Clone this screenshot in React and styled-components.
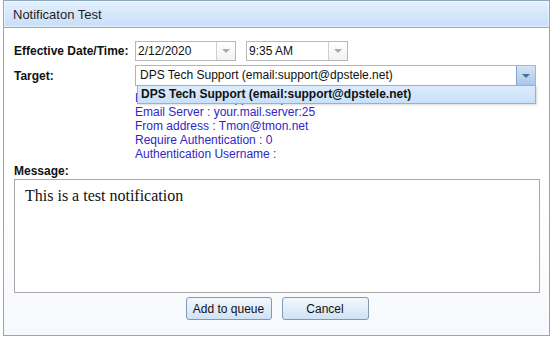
import React from 'react';
import styled, {createGlobalStyle} from 'styled-components';

const GlobalStyle = createGlobalStyle`
  html, body {
    margin: 0;
    padding: 0;
    background: #fff;
    font-family: "Liberation Sans", Arial, sans-serif;
  }
`;

const Window = styled.div`
  box-sizing: border-box;
  width: 547px;
  height: 336px;
  margin-left: 3px;
  border: 1px solid #8ea6be;
  background: linear-gradient(#ffffff 60%, #f6f9fd);
  display: flex;
  flex-direction: column;
`;

const TitleBar = styled.div`
  height: 26px;
  border-bottom: 1px solid #8ea6be;
  background: linear-gradient(#e4f0fe, #c6defa);
  box-shadow: inset 0 0 0 1px rgba(255, 255, 255, 0.55);
  display: flex;
  align-items: center;
  padding-left: 9px;
  font-size: 13px;
  color: #1e1e1e;
`;

const Body = styled.div`
  padding: 13px 9px 0 10px;
  display: flex;
  flex-direction: column;
`;

const Row = styled.div`
  display: flex;
  align-items: center;
  margin-top: ${p => p.$top || 0}px;
`;

const Label = styled.div`
  width: 121px;
  flex: none;
  font-size: 12px;
  font-weight: bold;
  color: #111;
`;

const Picker = styled.div`
  box-sizing: border-box;
  width: ${p => p.$width}px;
  height: 20px;
  border: 1px solid #b8b8b8;
  background: #fff;
  display: flex;
  margin-right: 10px;
`;

const PickerText = styled.div`
  flex: 1;
  font-size: 12px;
  line-height: 19px;
  padding-left: 2px;
  color: #111;
`;

const PickerButton = styled.div`
  width: 18px;
  border-left: 1px solid #cfcfcf;
  background: linear-gradient(#ffffff, #f2f2f2);
  display: flex;
  align-items: center;
  justify-content: center;
`;

const Arrow = styled.span`
  width: 0;
  height: 0;
  border-left: 4px solid transparent;
  border-right: 4px solid transparent;
  border-top: 4px solid ${p => p.$color};
`;

const Combo = styled.div`
  position: relative;
  box-sizing: border-box;
  width: 401px;
  height: 21px;
  border: 1px solid #a9b6c4;
  background: #fff;
  display: flex;
`;

const ComboText = styled.div`
  flex: 1;
  font-size: 12px;
  line-height: 19px;
  padding-left: 4px;
  color: #111;
  white-space: nowrap;
`;

const ComboButton = styled.div`
  width: 18px;
  border-left: 1px solid #86a6c8;
  background: linear-gradient(#d3e4f7, #a9c8ec);
  display: flex;
  align-items: center;
  justify-content: center;
`;

const DropList = styled.div`
  position: absolute;
  top: 19px;
  left: 1px;
  right: -1px;
  box-sizing: border-box;
  height: 19px;
  border: 1px solid #86b5ea;
  background: linear-gradient(#dcecfd, #c8e0fa);
  font-size: 12px;
  font-weight: bold;
  line-height: 17px;
  padding-left: 3px;
  color: #111;
  white-space: nowrap;
  box-shadow: 1px 1px 2px rgba(0, 0, 0, 0.15);
`;

const Info = styled.div`
  margin: 5px 0 0 121px;
  font-size: 12px;
  line-height: 14px;
  color: #3127c4;
`;

const MessageLabel = styled(Label)`
  width: auto;
  margin-top: 3px;
  line-height: 14px;
`;

const MessageBox = styled.div`
  box-sizing: border-box;
  margin-top: 1px;
  height: 114px;
  border: 1px solid #a8a8a8;
  background: #fff;
  padding: 7px 10px;
  font-family: "Liberation Serif", "Times New Roman", serif;
  font-size: 16px;
  color: #111;
`;

const Buttons = styled.div`
  display: flex;
  justify-content: center;
  gap: 10px;
  margin-top: 4px;
`;

const Button = styled.button`
  box-sizing: border-box;
  width: ${p => p.$width}px;
  height: 23px;
  border: 1px solid #7f9ab4;
  border-radius: 3px;
  background: linear-gradient(#f3f8fe, #cfe2f6);
  font-family: "Liberation Sans", Arial, sans-serif;
  font-size: 12px;
  color: #111;
  padding: 0;
`;

export default function App() {
  return (
    <>
      <GlobalStyle />
      <Window>
        <TitleBar>Notificaton Test</TitleBar>
        <Body>
          <Row>
            <Label>Effective Date/Time:</Label>
            <Picker $width={101}>
              <PickerText>2/12/2020</PickerText>
              <PickerButton><Arrow $color="#a3abb3" /></PickerButton>
            </Picker>
            <Picker $width={102}>
              <PickerText>9:35 AM</PickerText>
              <PickerButton><Arrow $color="#a3abb3" /></PickerButton>
            </Picker>
          </Row>
          <Row $top={4}>
            <Label>Target:</Label>
            <Combo>
              <ComboText>DPS Tech Support (email:support@dpstele.net)</ComboText>
              <ComboButton><Arrow $color="#4f6e8e" /></ComboButton>
              <DropList>DPS Tech Support (email:support@dpstele.net)</DropList>
            </Combo>
          </Row>
          <Info>
            <div>Email Address : support@dpstele.net</div>
            <div>Email Server : your.mail.server:25</div>
            <div>From address : Tmon@tmon.net</div>
            <div>Require Authentication : 0</div>
            <div>Authentication Username :</div>
          </Info>
          <MessageLabel>Message:</MessageLabel>
          <MessageBox>This is a test notification</MessageBox>
          <Buttons>
            <Button $width={86}>Add to queue</Button>
            <Button $width={87}>Cancel</Button>
          </Buttons>
        </Body>
      </Window>
    </>
  );
}
